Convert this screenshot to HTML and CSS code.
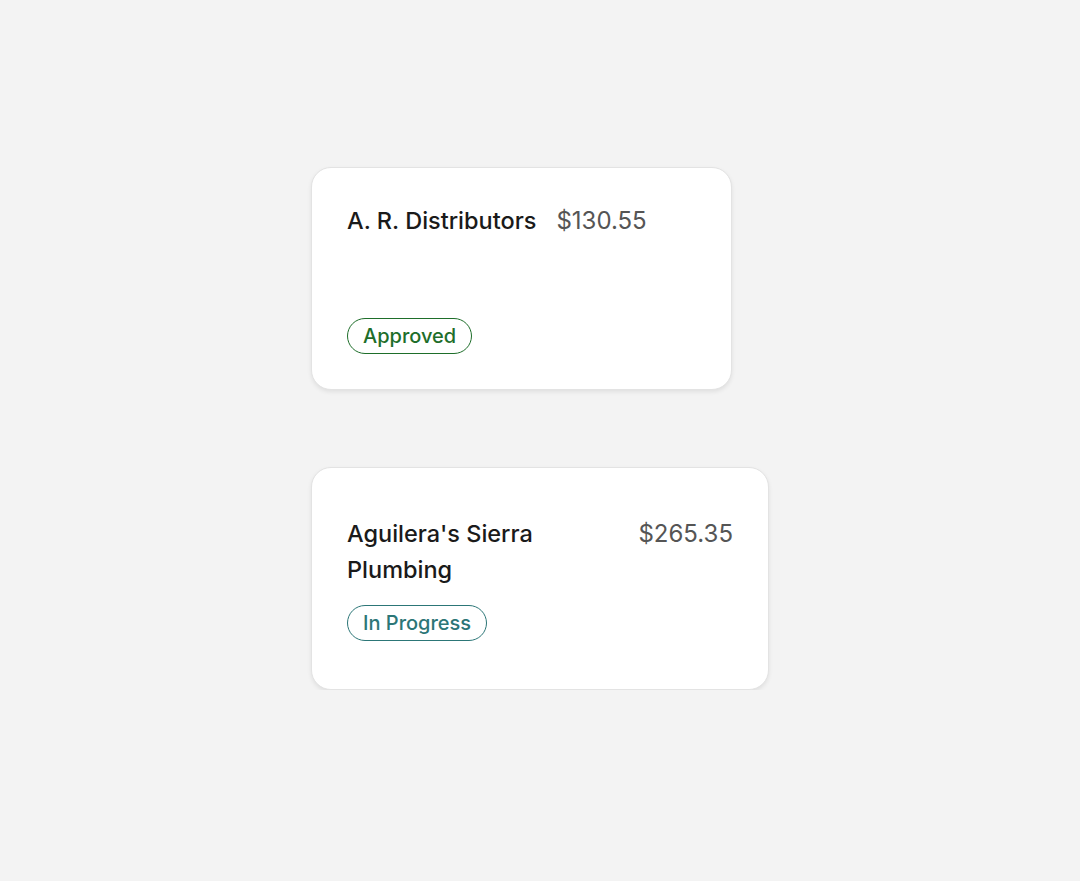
FILE: index.html
```html
<!DOCTYPE html>
<html>
<head>
<meta charset="utf-8">
<link rel="stylesheet" href="styles.css">
</head>
<body>
<main class="stack">
  <section class="card card--spread card--w1">
    <div class="row">
      <span class="title">A. R. Distributors</span>
      <span class="price">$130.55</span>
    </div>
    <div><span class="badge badge--approved">Approved</span></div>
  </section>
  <section class="card card--center card--w2">
    <div class="row">
      <span class="title title--wrap">Aguilera's Sierra Plumbing</span>
      <span class="price price--right">$265.35</span>
    </div>
    <div class="badge-row"><span class="badge badge--progress">In Progress</span></div>
  </section>
</main>
</body>
</html>
```
FILE: styles.css
```css
html, body {
  margin: 0;
  padding: 0;
  background: #f3f3f3;
  font-family: "Inter", "Liberation Sans", sans-serif;
}
.stack {
  display: flex;
  flex-direction: column;
  align-items: flex-start;
  gap: 77px;
  padding: 167px 0 0 311px;
}
.card {
  box-sizing: border-box;
  height: 223px;
  background: #fff;
  border: 1px solid #e3e3e3;
  border-radius: 20px;
  box-shadow: 0 2px 4px rgba(0,0,0,0.08);
  padding: 35px 35px;
  display: flex;
  flex-direction: column;
}
.card--w1 { width: 421px; }
.card--w2 { width: 458px; }
.card--spread { justify-content: space-between; }
.card--center { justify-content: center; }
.row {
  display: flex;
  align-items: flex-start;
  gap: 20px;
}
.title {
  font-size: 23.5px;
  line-height: 36px;
  font-weight: 500;
  color: #1a1a1a;
}
.title--wrap { width: 250px; }
.price {
  font-size: 24px;
  line-height: 36px;
  font-weight: 400;
  color: #555;
}
.price--right { margin-left: auto; }
.badge-row { margin-top: 17px; }
.badge {
  display: inline-flex;
  align-items: center;
  box-sizing: border-box;
  height: 36px;
  padding: 0 15px;
  border: 1px solid currentColor;
  border-radius: 18px;
  font-size: 20px;
  font-weight: 500;
}
.badge--approved { color: #1e6e2a; }
.badge--progress { color: #2c7677; }
```
